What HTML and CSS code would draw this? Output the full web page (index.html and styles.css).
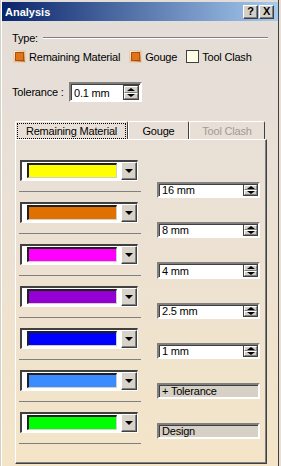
FILE: index.html
```html
<!DOCTYPE html>
<html>

<head>
    <title>Analysis</title>
    <link rel="stylesheet" href="styles.css">
</head>

<body>
<div class="window">
    <div class="titlebar">
        <span class="title">Analysis</span>
        <span class="title-btn">?</span>
        <span class="title-btn close">X</span>
    </div>

    <div class="content">
        <div class="type-row">
            <span>Type:</span>
            <span class="rule"></span>
        </div>

        <div class="checks">
            <span class="check"><span class="box on"></span>Remaining Material</span>
            <span class="check"><span class="box on"></span>Gouge</span>
            <span class="check"><span class="box"></span>Tool Clash</span>
        </div>

        <div class="tol-row">
            <span class="tol-label">Tolerance :</span>
            <div class="field tol-field">
                <span class="value">0.1 mm</span>
                <span class="spinner"><span class="up"></span><span class="down"></span></span>
            </div>
        </div>

        <div class="tabs">
            <div class="tab tab-main"><span class="focus">Remaining Material</span></div>
            <div class="tab tab-gouge">Gouge</div>
            <div class="tab tab-clash">Tool Clash</div>
        </div>

        <div class="panel">
            <div class="colors">
                <div class="color-item"><div class="combo"><span class="swatch yellow"></span><span class="drop"></span></div></div>
                <div class="color-item"><div class="combo"><span class="swatch orange"></span><span class="drop"></span></div></div>
                <div class="color-item"><div class="combo"><span class="swatch magenta"></span><span class="drop"></span></div></div>
                <div class="color-item"><div class="combo"><span class="swatch purple"></span><span class="drop"></span></div></div>
                <div class="color-item"><div class="combo"><span class="swatch blue"></span><span class="drop"></span></div></div>
                <div class="color-item"><div class="combo"><span class="swatch sky"></span><span class="drop"></span></div></div>
                <div class="color-item"><div class="combo"><span class="swatch green"></span><span class="drop"></span></div></div>
            </div>

            <div class="values">
                <div class="field val-field"><span class="value">16 mm</span><span class="spinner"><span class="up"></span><span class="down"></span></span></div>
                <div class="field val-field"><span class="value">8 mm</span><span class="spinner"><span class="up"></span><span class="down"></span></span></div>
                <div class="field val-field"><span class="value">4 mm</span><span class="spinner"><span class="up"></span><span class="down"></span></span></div>
                <div class="field val-field"><span class="value">2.5 mm</span><span class="spinner"><span class="up"></span><span class="down"></span></span></div>
                <div class="field val-field"><span class="value">1 mm</span><span class="spinner"><span class="up"></span><span class="down"></span></span></div>
                <div class="btn">+ Tolerance</div>
                <div class="btn">Design</div>
            </div>
        </div>
    </div>
</div>
</body>
</html>
```

FILE: styles.css
```css
* {
    box-sizing: border-box;
}
body, html {
    padding: 0;
    margin: 0;
}
body {
    font-family: "Liberation Sans", Arial, sans-serif;
    font-size: 11px;
    letter-spacing: -0.2px;
    color: #000;
}
.window {
    width: 281px;
    height: 466px;
    display: flex;
    flex-direction: column;
    background: linear-gradient(to bottom, #e3ddd8 0%, #e9e0d6 35%, #f4e5c8 100%);
    box-shadow: inset 1px 0 0 #d4d0c8, inset 2px 0 0 #fff, inset -2px 0 0 #e8e0d6, inset -3px 0 0 #404040;
}

/* title bar */
.titlebar {
    margin: 2px 3px 0 2px;
    height: 19px;
    padding: 0 4px 0 3px;
    display: flex;
    align-items: center;
    background: linear-gradient(to right, #0a246a, #a6caf0);
}
.title {
    flex: 1;
    color: #fff;
    font-weight: bold;
    letter-spacing: 0;
}
.title-btn {
    width: 15px;
    height: 14px;
    display: flex;
    align-items: center;
    justify-content: center;
    background: #d4d0c8;
    border: 1px solid;
    border-color: #fff #404040 #404040 #fff;
    box-shadow: inset -1px -1px 0 #808080;
    font-weight: bold;
    line-height: 1;
}
.title-btn.close {
    margin-left: 1px;
}

.content {
    flex: 1;
    display: flex;
    flex-direction: column;
    padding: 0 13px 0 12px;
}

/* type */
.type-row {
    margin-top: 10px;
    height: 13px;
    display: flex;
    align-items: center;
}
.type-row .rule {
    flex: 1;
    margin-left: 5px;
    border-top: 1px solid #808080;
    border-bottom: 1px solid #fff;
}
.checks {
    margin: 6px 0 0 1px;
    height: 13px;
    display: flex;
    align-items: center;
}
.check {
    display: flex;
    align-items: center;
    margin-right: 9px;
}
.box {
    width: 13px;
    height: 13px;
    margin-right: 3px;
    display: flex;
    align-items: center;
    justify-content: center;
    background: #ffffe6;
    border: 1px solid #404040;
}
.box.on {
    background: linear-gradient(135deg, #fff6ea, #e8b888 60%, #c0783c);
    border: 1px solid #e8d0b8;
}
.box.on::after {
    content: "";
    width: 7px;
    height: 7px;
    background: #e07418;
    border: 1px solid #a85010;
}

/* tolerance */
.tol-row {
    margin-top: 19px;
    height: 20px;
    display: flex;
    align-items: center;
}
.tol-label {
    width: 57px;
}
.field {
    display: flex;
    align-items: stretch;
    background: #fff;
    border: 2px solid;
    border-color: #808080 #fff #fff #808080;
    box-shadow: inset 1px 1px 0 #404040;
    padding: 1px 0 0 3px;
}
.field .value {
    flex: 1;
    display: flex;
    align-items: center;
}
.tol-field {
    width: 73px;
    height: 20px;
    padding-right: 1px;
}
.spinner {
    width: 16px;
    display: flex;
    flex-direction: column;
    border: 1px solid #404040;
}
.spinner span {
    flex: 1;
    display: flex;
    align-items: center;
    justify-content: center;
    background: #d4d0c8;
    border: 1px solid;
    border-color: #fff #808080 #808080 #fff;
}
.spinner .up::after {
    content: "";
    border-left: 4px solid transparent;
    border-right: 4px solid transparent;
    border-bottom: 3px solid #000;
}
.spinner .down::after {
    content: "";
    border-left: 4px solid transparent;
    border-right: 4px solid transparent;
    border-top: 3px solid #000;
}

/* tabs */
.tabs {
    margin: 19px 0 0 3px;
    height: 18px;
    display: flex;
}
.tab {
    height: 18px;
    display: flex;
    align-items: center;
    justify-content: center;
    border-top: 1px solid #fff;
    border-left: 1px solid #fff;
    border-right: 1px solid #404040;
    border-radius: 2px 2px 0 0;
}
.tab-main {
    width: 113px;
    align-items: stretch;
}
.tab-gouge {
    width: 61px;
}
.tab-clash {
    width: 76px;
    color: #a29a92;
}
.tab .focus {
    flex: 1;
    margin: 1px 1px 0 1px;
    display: flex;
    align-items: center;
    justify-content: center;
    border: 1px dotted #000;
}

/* panel */
.panel {
    width: 252px;
    height: 325px;
    margin-left: 3px;
    padding: 20px 0 0 3px;
    display: flex;
    border: 1px solid;
    border-color: #fff #404040 #404040 #fff;
    box-shadow: inset -1px -1px 0 #808080;
}
.colors {
    width: 122px;
}
.color-item {
    padding-bottom: 10px;
    margin-bottom: 10px;
    border-bottom: 1px solid #808080;
}
.combo {
    width: 118px;
    height: 21px;
    margin-left: 1px;
    display: flex;
    background: #fff;
    border: 2px solid;
    border-width: 2px 1px 1px 2px;
    border-color: #404040 #fff #fff #404040;
    padding-left: 5px;
}
.swatch {
    width: 90px;
    margin: 1px 4px 2px 0;
    border: 1px solid;
    border-width: 2px 1px 1px 2px;
    border-color: #202020 #d4d0c8 #d4d0c8 #202020;
}
.yellow { background: #ffff00; }
.orange { background: #e07000; }
.magenta { background: #ff00ff; }
.purple { background: #9400d3; }
.blue { background: #0000ff; }
.sky { background: #3a8cff; }
.green { background: #00ff00; }
.drop {
    width: 16px;
    display: flex;
    align-items: center;
    justify-content: center;
    background: #d8d2c8;
    border: 1px solid;
    border-color: #fff #404040 #404040 #fff;
    box-shadow: inset -1px -1px 0 #808080;
}
.drop::after {
    content: "";
    border-left: 4px solid transparent;
    border-right: 4px solid transparent;
    border-top: 4px solid #000;
}

.values {
    width: 103px;
    margin-left: 16px;
    padding-top: 22px;
    display: flex;
    flex-direction: column;
}
.val-field {
    height: 19px;
    margin-bottom: 24px;
    padding-top: 0;
}
.val-field .spinner {
    width: 15px;
}
.btn {
    height: 17px;
    margin-bottom: 24px;
    padding-left: 3px;
    display: flex;
    align-items: center;
    background: #d6d0c6;
    border: 2px solid;
    border-color: #808080 #fff #fff #808080;
    box-shadow: inset 1px 1px 0 #404040;
}
```
